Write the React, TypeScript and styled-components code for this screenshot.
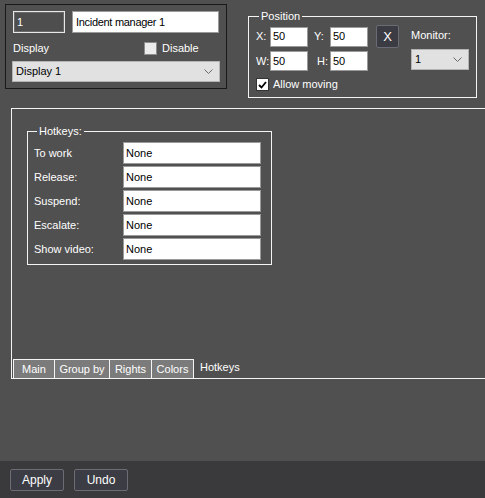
import React from "react";
import styled, { createGlobalStyle } from "styled-components";

const Global = createGlobalStyle`
  html, body { margin: 0; padding: 0; background: #505050; overflow: hidden; }
  body { font-family: "Liberation Sans", Arial, sans-serif; font-size: 11px; color: #fff; }
  * { box-sizing: border-box; }
`;

const Page = styled.div`
  width: 485px;
  height: 498px;
  display: flex;
  flex-direction: column;
  background: #505050;
`;

const TopRow = styled.div`
  display: flex;
  align-items: flex-start;
`;

const IdentityBox = styled.div`
  margin: 4px 0 0 5px;
  width: 222px;
  height: 85px;
  border: 1px solid #1a1a1a;
  padding: 6px 7px 0 7px;
  display: flex;
  flex-direction: column;
`;

const NameRow = styled.div`
  display: flex;
  gap: 7px;
`;

const Field = styled.div<{ $w: number; $h?: number; $dark?: boolean; $pad?: number }>`
  width: ${(p) => p.$w}px;
  height: ${(p) => p.$h ?? 22}px;
  padding-left: ${(p) => p.$pad ?? 2}px;
  display: flex;
  align-items: center;
  line-height: 13px;
  white-space: nowrap;
  background: ${(p) => (p.$dark ? "#4e4e4e" : "#ffffff")};
  color: ${(p) => (p.$dark ? "#ffffff" : "#000000")};
  border: 1px solid ${(p) => (p.$dark ? "#e8e8e8" : "#9a9a9a")};
  box-shadow: ${(p) => (p.$dark ? "inset 0 0 0 1px #6a6a6a" : "none")};
`;

const NameField = styled(Field)`
  letter-spacing: -0.3px;
`;

const DisplayRow = styled.div`
  margin-top: 8px;
  height: 14px;
  display: grid;
  grid-template-columns: 126px 13px auto;
  column-gap: 5px;
  align-items: center;
`;

const Label = styled.span<{ $indent?: number }>`
  padding-left: ${(p) => p.$indent ?? 0}px;
  line-height: 13px;
  white-space: nowrap;
`;

const Check = styled.div<{ $checked?: boolean }>`
  width: 13px;
  height: 13px;
  background: ${(p) => (p.$checked ? "#ffffff" : "#ececec")};
  border: 1px solid ${(p) => (p.$checked ? "#333" : "#8c8c8c")};
  display: flex;
  align-items: center;
  justify-content: center;
`;

const Select = styled.div<{ $w: number }>`
  width: ${(p) => p.$w}px;
  height: 21px;
  background: #e1e1e1;
  border: 1px solid #b4b4b4;
  color: #000;
  display: flex;
  align-items: center;
  justify-content: space-between;
  padding: 0 6px 0 3px;
  line-height: 13px;
`;

const DisplaySelect = styled(Select)`
  margin: 6px 0 0 -1px;
`;

const Group = styled.fieldset<{ $w: number }>`
  margin: 0;
  width: ${(p) => p.$w}px;
  border: 1px solid #f4f4f4;
  min-width: 0;
`;

const Legend = styled.legend`
  padding: 0 2px;
  margin-left: 3px;
  line-height: 12px;
  font-size: 11px;
`;

const PositionGroup = styled(Group)`
  margin: 10px 0 0 21px;
  padding: 3px 7px 6px 7px;
  display: flex;
  gap: 12px;
`;

const PosLeft = styled.div`
  display: flex;
  flex-direction: column;
`;

const CoordGrid = styled.div`
  display: grid;
  grid-template-columns: 14px 38px 22px 38px 8px 23px;
  grid-template-rows: 23px 20px;
  row-gap: 3px;
  align-items: center;
`;

const XButton = styled.div`
  grid-column: 6;
  width: 23px;
  height: 23px;
  background: #3b3b43;
  border: 1px solid #6b6b73;
  border-radius: 2px;
  display: flex;
  align-items: center;
  justify-content: center;
  font-size: 13px;
`;

const CheckRow = styled.div`
  margin-top: 7px;
  display: flex;
  align-items: center;
  gap: 4px;
`;

const MonitorCol = styled.div`
  display: flex;
  flex-direction: column;
  padding-top: 4px;
  gap: 7px;
`;

const Panel = styled.div`
  margin: 10px 0 0 11px;
  width: 480px;
  height: 271px;
  border: 1px solid #f4f4f4;
  display: flex;
  flex-direction: column;
`;

const HotkeyGroup = styled(Group)`
  margin: 16px 0 0 15px;
  padding: 5px 9px 4px 6px;
`;

const HotkeyGrid = styled.div`
  display: grid;
  grid-template-columns: 89px 138px;
  grid-auto-rows: 22px;
  row-gap: 2px;
  align-items: center;
`;

const TabStrip = styled.div`
  margin: auto 0 0 1px;
  display: flex;
  height: 19px;
`;

const Tab = styled.div<{ $w: number; $last?: boolean }>`
  width: ${(p) => p.$w}px;
  height: 19px;
  background: #7b7b7b;
  border-top: 1px solid #f4f4f4;
  border-left: 1px solid #f4f4f4;
  border-right: ${(p) => (p.$last ? "1px solid #f4f4f4" : "none")};
  display: flex;
  align-items: center;
  justify-content: center;
  line-height: 13px;
`;

const ActiveTab = styled.div`
  padding: 0 0 2px 6px;
  display: flex;
  align-items: center;
  line-height: 13px;
`;

const BottomBar = styled.div`
  margin-top: auto;
  height: 37px;
  background: #3a393b;
  padding: 8px 0 0 10px;
  display: flex;
  gap: 10px;
  align-items: flex-start;
`;

const Button = styled.div`
  width: 54px;
  height: 22px;
  background: #3c3c44;
  border: 1px solid #6c6c74;
  border-radius: 2px;
  display: flex;
  align-items: center;
  justify-content: center;
  font-size: 12px;
`;

const Chevron = () => (
  <svg width="9" height="5" viewBox="0 0 9 5">
    <polyline points="0.5,0.5 4.5,4.5 8.5,0.5" fill="none" stroke="#6a6a6a" strokeWidth="1" />
  </svg>
);

const Tick = () => (
  <svg width="9" height="8" viewBox="0 0 9 8">
    <polyline points="1,4 3.5,6.5 8,1" fill="none" stroke="#000" strokeWidth="1.8" />
  </svg>
);

const hotkeys = ["To work", "Release:", "Suspend:", "Escalate:", "Show video:"];
const tabs: [string, number][] = [
  ["Main", 41],
  ["Group by", 55],
  ["Rights", 42],
  ["Colors", 43],
];

export default function App() {
  return (
    <Page>
      <Global />
      <TopRow>
        <IdentityBox>
          <NameRow>
            <Field $w={52} $dark $pad={3}>1</Field>
            <NameField $w={147} $pad={3}>Incident manager 1</NameField>
          </NameRow>
          <DisplayRow>
            <Label>Display</Label>
            <Check />
            <Label>Disable</Label>
          </DisplayRow>
          <DisplaySelect $w={208}>
            <span>Display 1</span>
            <Chevron />
          </DisplaySelect>
        </IdentityBox>
        <PositionGroup $w={229}>
          <Legend>Position</Legend>
          <PosLeft>
            <CoordGrid>
              <Label>X:</Label>
              <Field $w={38} $h={20}>50</Field>
              <Label $indent={6}>Y:</Label>
              <Field $w={38} $h={20}>50</Field>
              <XButton>X</XButton>
              <Label>W:</Label>
              <Field $w={38} $h={20}>50</Field>
              <Label $indent={9}>H:</Label>
              <Field $w={38} $h={20}>50</Field>
            </CoordGrid>
            <CheckRow>
              <Check $checked>
                <Tick />
              </Check>
              <Label>Allow moving</Label>
            </CheckRow>
          </PosLeft>
          <MonitorCol>
            <Label>Monitor:</Label>
            <Select $w={58}>
              <span>1</span>
              <Chevron />
            </Select>
          </MonitorCol>
        </PositionGroup>
      </TopRow>
      <Panel>
        <HotkeyGroup $w={245}>
          <Legend>Hotkeys:</Legend>
          <HotkeyGrid>
            {hotkeys.map((h) => (
              <React.Fragment key={h}>
                <Label>{h}</Label>
                <Field $w={138} $pad={2}>None</Field>
              </React.Fragment>
            ))}
          </HotkeyGrid>
        </HotkeyGroup>
        <TabStrip>
          {tabs.map(([t, w], i) => (
            <Tab key={t} $w={w} $last={i === tabs.length - 1}>
              {t}
            </Tab>
          ))}
          <ActiveTab>Hotkeys</ActiveTab>
        </TabStrip>
      </Panel>
      <BottomBar>
        <Button>Apply</Button>
        <Button>Undo</Button>
      </BottomBar>
    </Page>
  );
}
